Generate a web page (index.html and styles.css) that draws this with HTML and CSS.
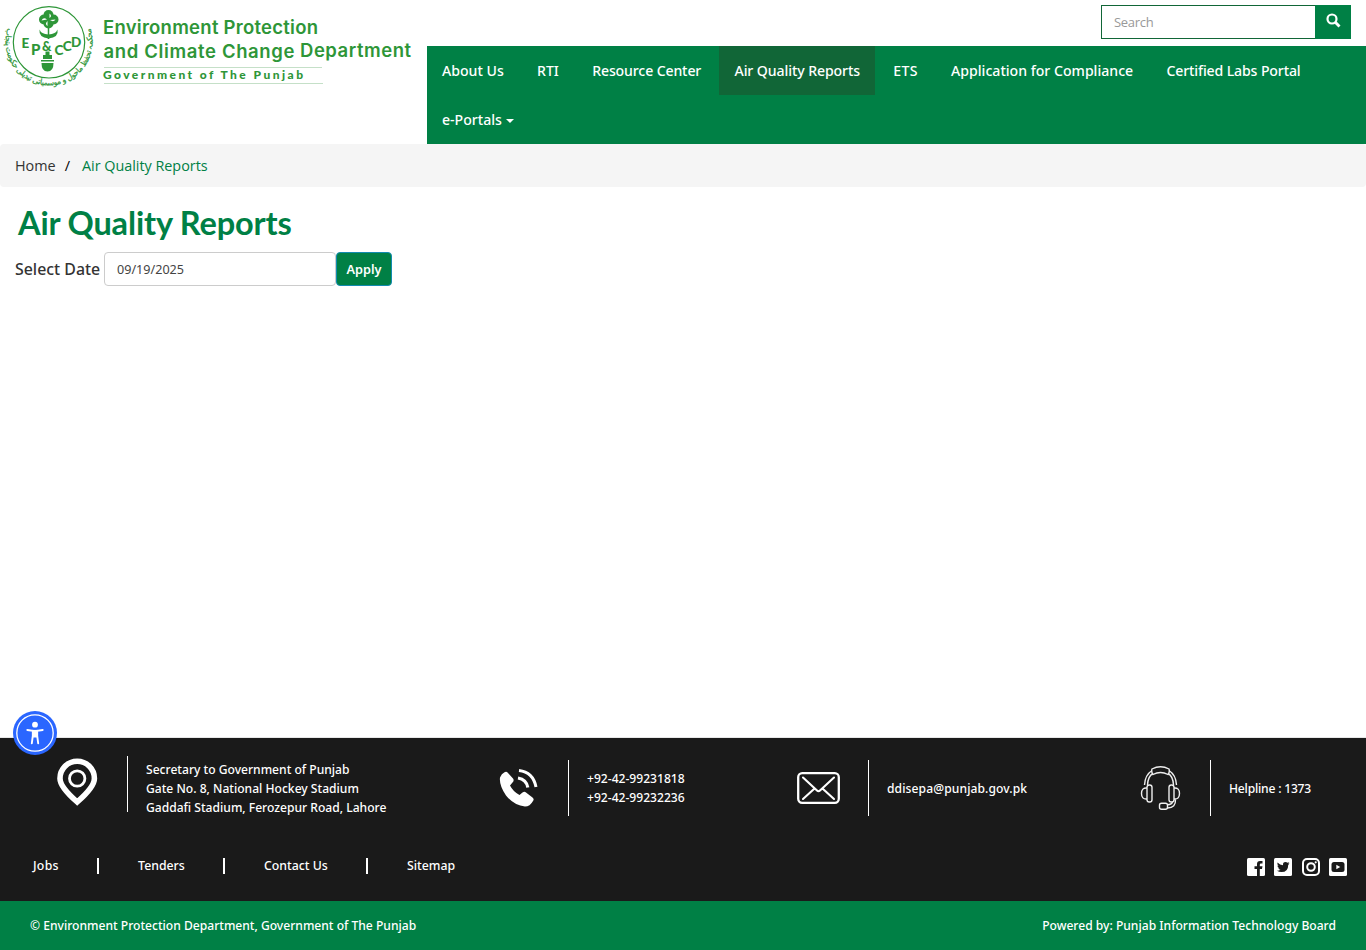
FILE: index.html
```html
<!DOCTYPE html>
<html lang="en">
<head>
<meta charset="utf-8">
<title>Air Quality Reports</title>
<link rel="stylesheet" href="styles.css">
</head>
<body>
<header class="header">
  <a class="brand" href="#">
    <svg width="427" height="100" viewBox="0 0 427 100" role="img" aria-label="Environment Protection and Climate Change Department">
      <defs><path id="ring" d="M8.500 26 A43.500 43.500 0 1 0 89.500 26"/></defs>
      <g fill="none" stroke="#2e9638">
        <circle cx="49" cy="42.300" r="35.700" stroke-width="1.200"/>
        <path d="M48.500 27V39" stroke-width="1.500"/>
      </g>
      <g fill="#2e9638">
        <circle cx="48.500" cy="15" r="5"/><circle cx="44" cy="19.500" r="5"/>
        <circle cx="53.500" cy="19.500" r="5"/><circle cx="48.500" cy="23.500" r="5"/>
        <path d="M39.500 29.500Q41 34 48.500 34.500Q56 34 57.500 29.500Q59 37.500 48.500 38.500Q38.500 37.500 39.500 29.500Z"/>
        <path d="M45.500 51.500H49.500V55H52V59H43V55H45.500ZM41 60H54V61.500H41ZM41.500 63H53.500Q53.500 71.500 47.500 71.500Q41.500 71.500 41.500 63Z"/>
      </g>
      <path d="M41.500 20.500Q43.500 16.500 47 19.500ZM49.500 13.500Q52.500 16 49.500 18ZM50 20Q53.500 22.500 55.500 19.500ZM47.500 21Q44.500 24 47.500 26Z" fill="#fff"/>
      <g class="seal-letters">
        <text x="21.500" y="48" textLength="7">E</text>
        <text x="31" y="54.500" font-size="15" textLength="8">P</text>
        <text x="42" y="50.500" font-size="13" textLength="9">&amp;</text>
        <text x="54.500" y="54.500" textLength="7">C</text>
        <text x="62.800" y="51" textLength="7">C</text>
        <text x="71" y="46.500" textLength="8">D</text>
      </g>
      <text class="ring-text"><textPath href="#ring" startOffset="50%" text-anchor="middle" textLength="164">محکمہ تحفظ ماحول و موسمیاتی تبدیلی حکومت پنجاب</textPath></text>
      <text class="logo-name" x="103" y="34.300" textLength="215">Environment Protection</text>
      <text class="logo-name" x="103.500" y="58.300" textLength="191">and Climate Change</text>
      <text class="logo-name" x="300" y="57.300" textLength="111">Department</text>
      <path d="M104 67.500H322M104 83.500H323" stroke="#c5e0c8"/>
      <text class="logo-gov" x="103" y="79" textLength="200">Government of The Punjab</text>
    </svg>
  </a>
  <div class="header-main">
    <form class="search">
      <input class="search-input" type="text" placeholder="Search">
      <button class="search-button" type="button" aria-label="Search"><svg width="15" height="15" viewBox="0 0 15 15" fill="none" stroke="#fff"><circle cx="6" cy="6" r="4.500" stroke-width="2.200"/><path d="M9.300 9.300L13.500 13.500" stroke-width="2.900"/></svg></button>
    </form>
    <nav class="nav">
      <a class="nav-link" href="#">About Us</a>
      <a class="nav-link" href="#">RTI</a>
      <a class="nav-link nav-resource" href="#">Resource Center</a>
      <a class="nav-link nav-current" href="#">Air Quality Reports</a>
      <a class="nav-link nav-ets" href="#">ETS</a>
      <a class="nav-link" href="#">Application for Compliance</a>
      <a class="nav-link nav-labs" href="#">Certified Labs Portal</a>
      <a class="nav-link" href="#">e-Portals<span class="caret"></span></a>
    </nav>
  </div>
</header>
<div class="breadcrumb"><a href="#">Home</a><span class="slash">/</span><span class="here">Air Quality Reports</span></div>
<main class="content">
  <h1 class="title">Air Quality Reports</h1>
  <form class="filter">
    <label class="filter-label" for="date">Select Date</label>
    <input class="filter-input" id="date" type="text" value="09/19/2025">
    <button class="filter-button" type="button">Apply</button>
  </form>
</main>
<footer class="footer">
  <div class="contacts">
    <div class="contact contact-address">
      <svg class="contact-icon" width="43" height="48" viewBox="0 0 43 48" fill="none" stroke="#fff"><path d="M21.200 44Q4 29 4 20.500A17.200 17.200 0 0 1 38.400 20.500Q38.400 29 21.200 44Z" stroke-width="5.600"/><circle cx="21.200" cy="20.500" r="7.700" stroke-width="2.800"/></svg>
      <p class="contact-text">Secretary to Government of Punjab<br>Gate No. 8, National Hockey Stadium<br>Gaddafi Stadium, Ferozepur Road, Lahore</p>
    </div>
    <div class="contact">
      <svg class="contact-icon" width="43" height="40" viewBox="0 0 43 40"><path fill="#fff" d="M7.500 4.200Q9.500 3 11 5L16 10.500Q17.500 12.500 15.500 14.500L13 17.500Q16 23.500 22.500 27L25.500 24.500Q27.500 23 29 24.500L35.500 29.500Q37.500 31 36 33Q33 38.500 28 38.500Q17 37.500 9 27.500Q2 17 3 9.500Q4.500 5.500 7.500 4.200Z"/><g fill="none" stroke="#fff"><path d="M22 2.500Q36 4 39 19" stroke-width="3"/><path d="M21 10Q29.500 11.500 30.800 19.500" stroke-width="3.200"/></g></svg>
      <p class="contact-text">+92-42-99231818<br>+92-42-99232236</p>
    </div>
    <div class="contact">
      <svg class="contact-icon" width="43" height="32" viewBox="0 0 43 32" fill="none" stroke="#fff"><rect x="1.200" y="1.200" width="40.600" height="29.600" rx="4" stroke-width="2.300"/><path d="M6 5.500L20 18.500Q21.500 20 23 18.500L37 5.500M6 27L17 17M37 27L26 17" stroke-width="2.100" stroke-linecap="round"/></svg>
      <p class="contact-text contact-mail">ddisepa@punjab.gov.pk</p>
    </div>
    <div class="contact">
      <svg class="contact-icon" width="43" height="44" viewBox="0 0 43 44" fill="none" stroke="#eee" stroke-width="1.400"><path d="M5.500 19Q6 9 13 4.500M37.500 19Q37 9 30 4.500M8.500 19Q9 10 14 7.500M34.500 19Q34 10 29 7.500"/><path d="M13 3Q21.500-1.500 30 3Q31 6 29 8.500Q21.500 4.500 14 8.500Q12 6 13 3Z"/><rect x="8" y="19" width="5" height="17" rx="2.300"/><rect x="30" y="19" width="5" height="17" rx="2.300"/><path d="M8 22Q2.500 21.500 2.500 27.500Q2.500 33.500 8 33M35 22Q40.500 21.500 40.500 27.500Q40.500 33.500 35 33M36.500 33Q37 42 28.500 42M33.500 36Q33 38.500 28.500 38.800"/><rect x="20.500" y="37.300" width="8" height="6" rx="2"/></svg>
      <p class="contact-text contact-help">Helpline : 1373</p>
    </div>
  </div>
  <div class="footer-nav">
    <nav class="links"><a href="#">Jobs</a><i class="bar"></i><a href="#">Tenders</a><i class="bar"></i><a href="#">Contact Us</a><i class="bar"></i><a href="#">Sitemap</a></nav>
    <div class="social">
      <svg width="18" height="18" viewBox="0 0 18 18"><rect width="18" height="18" rx="1.500" fill="#fff"/><path d="M10 18V11H7.500V8.200H10V6Q10 3 13 3H15.500V5.500H14Q12.800 5.500 12.800 6.800V8.200H15.500L15 11H12.800V18Z" fill="#1a1a1a"/></svg>
      <svg width="18" height="18" viewBox="0 0 18 18"><rect width="18" height="18" rx="1.500" fill="#fff"/><path d="M3.500 4.500Q6 7 9 7.200Q8.700 4 11.500 4Q12.700 4 13.500 4.800L15.300 4.200L14.300 5.700L15.500 5.500L14.200 6.900Q14.200 14 7.500 14Q4.800 14 3 12.800Q5.200 12.800 6.500 11.800Q4.700 11.500 4.300 10.200H5.400Q3.400 9.500 3.400 7.500L4.500 7.800Q2.800 6.300 3.500 4.500Z" fill="#1a1a1a"/></svg>
      <svg width="18" height="18" viewBox="0 0 18 18" fill="none" stroke="#fff" stroke-width="2"><rect x="1" y="1" width="16" height="16" rx="4"/><circle cx="9" cy="9" r="3.800"/><circle cx="13.700" cy="4.300" r="1.100" fill="#fff" stroke="none"/></svg>
      <svg width="18" height="18" viewBox="0 0 18 18"><rect width="18" height="18" rx="1.500" fill="#fff"/><rect x="2.500" y="4" width="13" height="10" rx="2.500" fill="#1a1a1a"/><path d="M7.300 6.700V11.300L11.300 9Z" fill="#fff"/></svg>
    </div>
  </div>
  <div class="legal"><span>© Environment Protection Department, Government of The Punjab</span><span>Powered by: Punjab Information Technology Board</span></div>
</footer>
<button class="accessibility" type="button" aria-label="Accessibility"><svg width="44" height="44" viewBox="0 0 44 44"><circle cx="22" cy="22" r="22" fill="#2a66ff"/><circle cx="22" cy="22" r="18.200" fill="none" stroke="#fff" stroke-width="1.300"/><circle cx="22" cy="13.700" r="2.900" fill="#fff"/><path d="M14.300 19L19.800 19.800V25L18.800 32.300M29.700 19L24.200 19.800V25L25.200 32.300" fill="none" stroke="#fff" stroke-width="1.900" stroke-linecap="round"/><path d="M19 18.900H25V26.500H19Z" fill="#fff"/></svg></button>
</body>
</html>
```
FILE: styles.css
```css
* { box-sizing: border-box; }
body { margin: 0; min-height: 950px; display: flex; flex-direction: column; position: relative; background: #fff; color: #333; font-family: "Noto Sans", "Open Sans", sans-serif; }
a { color: inherit; text-decoration: none; }
svg { display: block; }
p, h1 { margin: 0; }
input, button { font-family: inherit; }

.header { display: flex; height: 144px; }
.brand { width: 427px; }
.seal-letters { fill: #2e9638; font-family: Lato, sans-serif; font-size: 13.500px; font-weight: 900; }
.ring-text { fill: #2e9638; stroke: #2e9638; stroke-width: .2px; font-family: "DejaVu Sans", sans-serif; font-size: 8px; }
.logo-name { fill: #2e9638; font-family: Inter, Lato, sans-serif; font-size: 18.5px; font-weight: 600; }
.logo-gov { fill: #2e9638; font-family: Lato, "Open Sans", sans-serif; font-size: 12px; font-weight: 900; }
.header-main { flex: 1; display: flex; flex-direction: column; }
.search { display: flex; justify-content: flex-end; height: 46px; padding: 5px 15px 7px 0; }
.search-input { width: 214px; height: 34px; padding: 0 12px; border: 1px solid #116637; border-right: 0; background: #fff; font: 400 13px "Open Sans", sans-serif; letter-spacing: -.3px; outline: 0; }
.search-input::placeholder { color: #999; }
.search-button { display: flex; justify-content: center; width: 36px; height: 34px; padding: 8px 0 0; border: 0; background: #008045; }
.nav { flex: 1; display: flex; flex-wrap: wrap; align-content: flex-start; column-gap: 3.3px; background: #008045; }
.nav-link { display: flex; align-items: center; height: 49px; padding: 0 15px; color: #fff; font-size: 14.1px; font-weight: 500; white-space: nowrap; }
.nav-resource { letter-spacing: -.13px; }
.nav-current { background: #116637; letter-spacing: -.09px; }
.nav-ets { letter-spacing: .3px; }
.nav-labs { letter-spacing: -.13px; }
.caret { margin: 3px 0 0 4px; border: 4px solid transparent; border-top-color: #fff; border-bottom: 0; }

.breadcrumb { display: flex; align-items: center; height: 43px; padding: 0 15px; border-radius: 4px; background: #f5f5f5; font: 400 14.4px "Open Sans", sans-serif; }
.slash { margin: 0 12px 0 9px; color: #000; }
.here { color: #008045; letter-spacing: -.02px; }
.content { flex: 1; padding: 15px; }
.title { padding-left: 3px; height: 50px; color: #008045; font: 700 32.500px/42px Lato, sans-serif; letter-spacing: -.15px; }
.filter { display: flex; align-items: center; height: 34px; }
.filter-label { width: 89px; font-size: 15.9px; font-weight: 500; white-space: nowrap; }
.filter-input { width: 232px; height: 34px; padding: 0 12px; border: 1px solid #ccc; border-radius: 4px; color: #444; font-size: 12.6px; outline: 0; }
.filter-button { width: 56px; height: 34px; padding: 0 0 1px; border: 1px solid #128bb0; border-radius: 4px; background: #008045; color: #fff; font-size: 12.700px; font-weight: 600; }

.footer { border-top: 1px solid #e7e7e7; background: #1a1a1a; color: #fff; font-size: 12.100px; font-weight: 500; }
.contacts { display: grid; grid-template-columns: 441px 300px 342px 1fr; align-items: start; height: 106px; padding-top: 22px; }
.contact { display: flex; align-items: center; height: 56px; }
.contact-address { margin-top: -4px; }
.contact-icon { flex: none; margin: 0 28px 0 56px; }
.contact-address .contact-icon { margin-top: -4px; }
.contact-text { display: grid; align-content: center; height: 56px; padding-left: 18px; border-left: 1px solid #fff; line-height: 19px; white-space: nowrap; }
.contact-address .contact-text { padding-top: 8px; }
.contact-mail { letter-spacing: .1px; }
.contact-help { letter-spacing: -.2px; }
.footer-nav { display: flex; justify-content: space-between; align-items: center; height: 57px; padding: 0 19px 14px 33px; }
.links { display: flex; align-items: center; gap: 38.600px; font-size: 12.300px; }
.links a:first-child { letter-spacing: .3px; }
.bar { width: 2px; height: 16px; background: #fff; }
.social { display: flex; gap: 9.400px; padding-top: 3px; }
.legal { display: flex; justify-content: space-between; align-items: center; height: 49px; padding: 0 30px; background: #008045; }
.accessibility { position: absolute; left: 13px; top: 711px; width: 44px; height: 44px; padding: 0; border: 0; background: none; }
```
